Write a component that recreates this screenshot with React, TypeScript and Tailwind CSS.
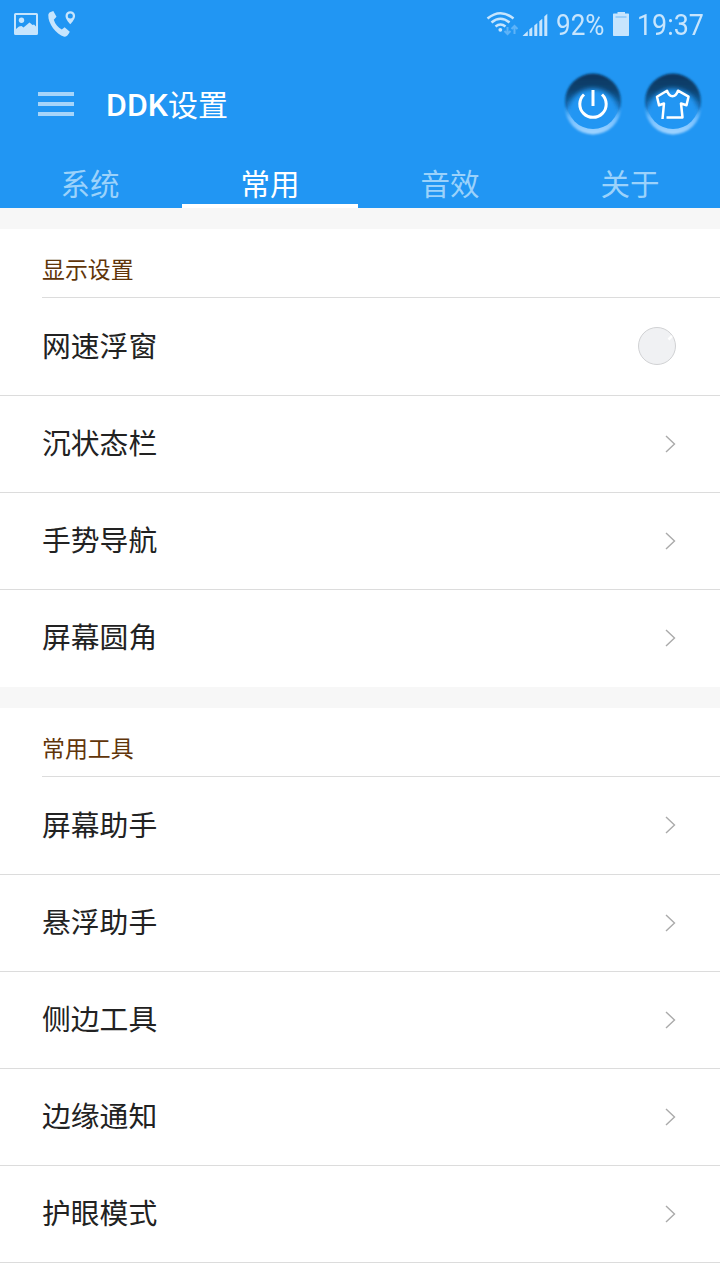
const GROUPS = [
  { title: '显示设置', rows: ['网速浮窗', '沉状态栏', '手势导航', '屏幕圆角'] },
  { title: '常用工具', rows: ['屏幕助手', '悬浮助手', '侧边工具', '边缘通知', '护眼模式'] },
];
const TABS = ['系统', '常用', '音效', '关于'];

function StatusBar() {
  return (
    <div className="flex h-[50px] shrink-0 items-center justify-between text-[#c7e5fd]">
      <svg width="90" height="50" fill="currentColor">
        <path fillRule="evenodd" d="M15.500 13h21a1.500 1.500 0 0 1 1.500 1.500v19a1.500 1.500 0 0 1-1.500 1.500h-21a1.500 1.500 0 0 1-1.500-1.500v-19a1.500 1.500 0 0 1 1.500-1.500zM16 15v14l3-2.500 2.500-.5 2 1.500 6-5 3 2.500 1.500-.5 2 2V15z" />
        <circle cx="21.500" cy="20.300" r="2.700" />
        <path d="M50 12.200L53.300 11l3.200 5.800-2.700 3c1.400 4.500 4.200 7.700 8 9.800l2.800-2.400 5.200 4.600c-1.300 3-3.300 5-5.500 5C56 34 48 24 48.300 15c.1-1.200.7-2.200 1.700-2.800z" />
        <path fillRule="evenodd" d="M70.300 11.200a4.800 4.800 0 0 1 4.800 4.800c0 3.400-4.800 8.300-4.800 8.300s-4.800-4.900-4.800-8.300a4.800 4.800 0 0 1 4.800-4.800zm0 2.300a2.500 2.500 0 1 0 0 5 2.500 2.500 0 0 0 0-5z" />
      </svg>
      <div className="flex items-center">
        <svg width="76" height="50" viewBox="480 0 76 50" fill="none" stroke="currentColor" strokeWidth="2.500">
          <path d="M487.500 18.500Q500.500 8 513.500 18.500M491.500 22.500Q500.500 15 509.500 22.500M495.500 26.500Q500.500 22.500 505.500 26.500" />
          <circle cx="500.300" cy="29.800" r="1.900" fill="currentColor" stroke="none" />
          <g stroke="#5eb3f8" strokeWidth="2">
            <path d="M507.500 27v7M504.500 31l3 3 3-3M514.500 34v-8M511.500 29l3-3 3 3" />
          </g>
          <g fill="currentColor" stroke="none">
            <path d="M522.500 36l5.300-5v5zM529.300 36v-6.500l3-2.500v9zM534.300 36V25.500l3-2.500v13zM539.300 36V21.300l3-2.500V36zM544.300 36V16.500l3-2.800V36z" />
          </g>
        </svg>
        <span className="block h-[50px] w-[57px] origin-left scale-x-[0.87] font-['Roboto',sans-serif] text-[30px] leading-[49px]">92%</span>
        <svg width="24" height="50" viewBox="613 0 24 50" fill="currentColor">
          <path d="M617.500 12h7.500v1.500h3.300q.7 0 .7.700V35.300q0 .7-.7.700h-14.600q-.7 0-.7-.7V14.200q0-.7.7-.7h3.800z" />
          <path d="M615.500 17h11" stroke="#6db9f8" strokeWidth="1" />
        </svg>
        <span className="block h-[50px] w-[83px] origin-left scale-x-[0.895] whitespace-nowrap font-['Roboto',sans-serif] text-[30px] leading-[49px]">19:37</span>
      </div>
    </div>
  );
}

function RoundButton({ kind }: { kind: 'power' | 'theme' }) {
  return (
    <svg width="80" height="76" viewBox="0 0 80 76" fill="none">
      <defs>
        <linearGradient id={kind + 'Shade'} x1="0" y1="0" x2="0" y2="1">
          <stop offset="0" stopColor="#07365f" />
          <stop offset=".3" stopColor="#0a4270" />
          <stop offset=".58" stopColor="#1567ac" />
          <stop offset=".78" stopColor="#2196f3" stopOpacity="0" />
        </linearGradient>
        <linearGradient id={kind + 'Light'} x1="0" y1="0" x2="0" y2="1">
          <stop offset=".5" stopColor="#8ecaff" stopOpacity="0" />
          <stop offset=".72" stopColor="#73bfff" />
          <stop offset="1" stopColor="#a5d6ff" />
        </linearGradient>
        <filter id={kind + 'Blur'} x="-20%" y="-20%" width="140%" height="140%"><feGaussianBlur stdDeviation="1.200" /></filter>
        <filter id={kind + 'Soft'} x="-20%" y="-20%" width="140%" height="140%"><feGaussianBlur stdDeviation="2.500" /></filter>
        <clipPath id={kind + 'Clip'}><circle cx="40" cy="35" r="26" /></clipPath>
      </defs>
      <circle cx="40" cy="38.500" r="28" fill={`url(#${kind}Light)`} filter={`url(#${kind}Blur)`} />
      <circle cx="40" cy="33.500" r="28" fill={`url(#${kind}Shade)`} filter={`url(#${kind}Blur)`} />
      <g clipPath={`url(#${kind}Clip)`}>
        <circle cx="40" cy="46.500" r="26" fill="#2196f3" filter={`url(#${kind}Soft)`} />
      </g>
      {kind === 'power' ? (
        <g stroke="#fff" strokeWidth="3">
          <path d="M31 26.500a13.200 13.200 0 1 0 18 0" />
          <path d="M40 22v16" />
        </g>
      ) : (
        <path d="M29.500 51l1.500-15.500-5 1.800-2-8.600 10-6c2.500 7.500 8.500 7.500 11 0l10.500 6-2 8.600-5.500-1.800 1.500 14H33.500" stroke="#fff" strokeWidth="2.500" strokeLinejoin="round" />
      )}
    </svg>
  );
}

export default function App() {
  return (
    <div className="h-[1280px] w-[720px] overflow-hidden bg-white font-['Noto_Sans_CJK_SC',sans-serif]">
      <header className="flex h-[208px] flex-col bg-[#2196f3]">
        <StatusBar />
        <div className="flex h-[110px] shrink-0 items-center pb-[2px]">
          <div className="ml-[38px] flex w-9 flex-col gap-[6px]">
            <i className="h-1 bg-[#a6d5fa]" />
            <i className="h-1 bg-[#a6d5fa]" />
            <i className="h-1 bg-[#a6d5fa]" />
          </div>
          <h1 className="ml-8 flex items-center text-[30px] leading-[50px] text-white">
            <span className="pt-px font-['Roboto',sans-serif] text-[32px] font-medium">DDK</span>
            <span className="pb-[2px]">设置</span>
          </h1>
          <div className="ml-auto mr-[7px] flex pt-1">
            <RoundButton kind="power" />
            <RoundButton kind="theme" />
          </div>
        </div>
        <nav className="grid h-12 shrink-0 grid-cols-4">
          {TABS.map((tab, i) => (
            <div key={tab} className={i === 1 ? 'mx-[2px] border-b-4 border-white text-center text-[29.500px] leading-[44px] text-white' : 'border-b-4 border-transparent text-center text-[29.500px] leading-[44px] text-[#9bd2fb]'}>
              {tab}
            </div>
          ))}
        </nav>
      </header>
      {GROUPS.map((group, g) => (
        <section key={group.title}>
          <div className="h-[21px] bg-[#f7f7f7]" />
          <div className="ml-[42px] flex h-[69px] items-center border-b border-[#dcdcdc] pt-[9px] text-[22.900px] leading-[34px] text-[#603509]">{group.title}</div>
          {group.rows.map((row, i) => (
            <div key={row} className={'flex items-center justify-between border-b pb-px pl-[42px] pr-11 text-[28.800px] leading-10 text-[#222] ' + (i === 0 ? 'h-[98px] ' : 'h-[97px] ') + (g === 0 && i === 3 ? 'border-transparent' : 'border-[#dcdcdc]')}>
              <span className="pb-[3px]">{row}</span>
              {g === 0 && i === 0 ? (
                <svg width="38" height="38">
                  <circle cx="19" cy="19" r="18.500" fill="#f0f1f3" stroke="#d0d1d3" />
                  <path d="M30.500 12.500l3.500-3.500" stroke="#fff" strokeWidth="2.500" />
                </svg>
              ) : (
                <svg width="11" height="18" fill="none" stroke="#aaa" strokeWidth="1.400"><path d="M1 1l8.500 8L1 17" /></svg>
              )}
            </div>
          ))}
        </section>
      ))}
    </div>
  );
}
